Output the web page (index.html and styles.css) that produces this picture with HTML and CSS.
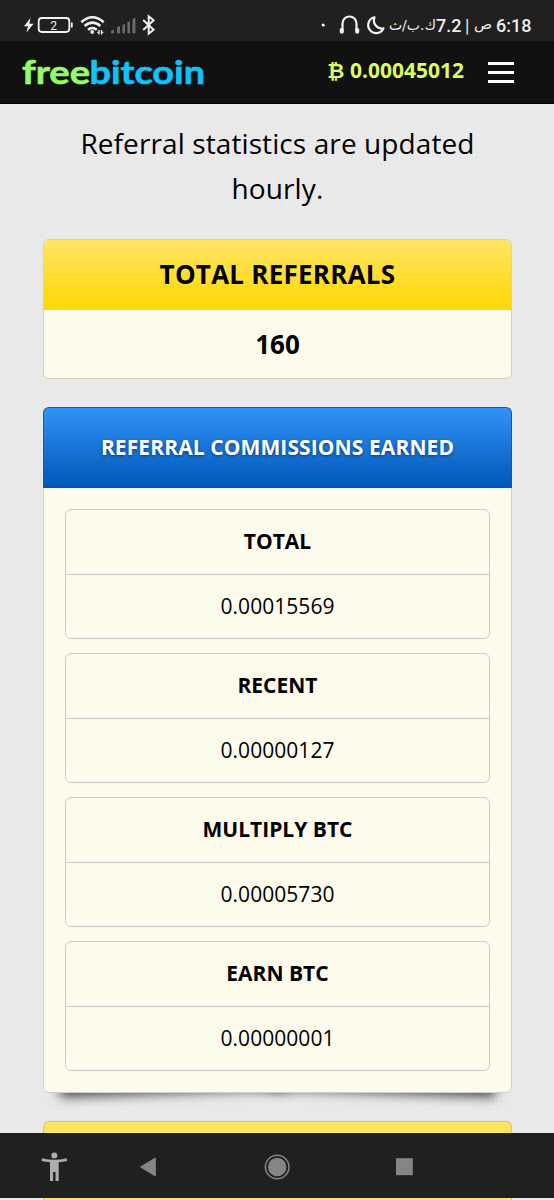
FILE: index.html
```html
<!DOCTYPE html>
<html lang="en">
<head>
    <meta charset="UTF-8">
    <meta name="viewport" content="width=device-width, initial-scale=1.0">
    <title>freebitcoin - Referrals</title>
    <link rel="stylesheet" href="styles.css">
</head>
<body>
    <div class="status-bar">
        <svg class="status-icons" width="160" height="41" viewBox="0 0 160 41">
            <path d="M30.500 18 24 26.300h4l-1.600 6.200 7.200-8.800h-4.200z" fill="#f2f2f2"/>
            <rect x="38.700" y="18" width="30.600" height="14" rx="3.200" fill="none" stroke="#f2f2f2" stroke-width="1.800"/>
            <path d="M71.800 22.500v5" stroke="#f2f2f2" stroke-width="1.800"/>
            <text class="battery-level" x="53.500" y="29.500">2</text>
            <g fill="none" stroke="#f2f2f2" stroke-width="2.500">
                <path d="M81.300 22.200q11.200-9.800 22.400 0"/>
                <path d="M84.600 26q7.900-6.800 15.800 0"/>
                <path d="M88 29.800q4.400-3.700 8.800 0"/>
            </g>
            <circle cx="92.200" cy="32" r="1.900" fill="#f2f2f2"/>
            <path d="M99 30v4.500M101.500 30v4.500M97.200 32.300h1.800M101.500 32.300h1.800" stroke="#f2f2f2" stroke-width="1.300"/>
            <path d="M111 33.300v-2.200l3-1.600v3.800zM117 33.300v-6l3-1.300v7.300zM122.400 33.300v-8.300l2.600-1.300v9.600zM127.400 33.300v-11l2.600-1.300v12.300zM132.500 33.300V19.300l2.900-1.800v15.800z" fill="#6b6b6b"/>
            <path d="M143.200 20l10.400 9.700-4.900 4V16.300l4.900 4-10.400 9.700" fill="none" stroke="#f2f2f2" stroke-width="2"/>
        </svg>
        <div class="status-right">
            <svg width="71" height="41" viewBox="318 0 71 41">
                <circle cx="323.200" cy="25" r="1.600" fill="#f2f2f2"/>
                <path d="M342.500 31V23.500a7 7 0 0 1 14 0V31" fill="none" stroke="#f2f2f2" stroke-width="2.200"/>
                <rect x="339.800" y="28" width="4" height="5.500" rx="1.600" fill="#f2f2f2"/>
                <rect x="355.200" y="28" width="4" height="5.500" rx="1.600" fill="#f2f2f2"/>
                <path d="M374.500 17.300A8 8 0 1 0 383.500 28.400 8.200 8.200 0 0 1 374.500 17.300z" fill="none" stroke="#f2f2f2" stroke-width="2.200" stroke-linejoin="round"/>
            </svg>
            <span class="speed-unit" dir="rtl">ك.ب/ث</span>
            <span class="speed">7.2</span>
            <span class="divider">|</span>
            <span class="meridiem">ص</span>
            <span class="time">6:18</span>
        </div>
    </div>

    <header class="header">
        <svg class="logo" width="190" height="54" viewBox="0 0 190 54">
            <text class="logo-free" x="2" y="38" textLength="68" lengthAdjust="spacingAndGlyphs">free</text>
            <text class="logo-bitcoin" x="69.500" y="38" textLength="115.500" lengthAdjust="spacingAndGlyphs">bitcoin</text>
        </svg>
        <div class="balance"><span class="coin">₿</span> 0.00045012</div>
        <div class="menu"><i></i><i></i><i></i></div>
    </header>

    <main class="content">
        <p class="notice">Referral statistics are updated hourly.</p>

        <section class="card">
            <h2 class="card-title">TOTAL REFERRALS</h2>
            <div class="card-value">160</div>
        </section>

        <div class="commissions-wrap">
            <section class="commissions">
                <h2 class="commissions-title">REFERRAL COMMISSIONS EARNED</h2>
                <div class="boxes">
                    <div class="box">
                        <h3>TOTAL</h3>
                        <p>0.00015569</p>
                    </div>
                    <div class="box">
                        <h3>RECENT</h3>
                        <p>0.00000127</p>
                    </div>
                    <div class="box">
                        <h3>MULTIPLY BTC</h3>
                        <p>0.00005730</p>
                    </div>
                    <div class="box">
                        <h3>EARN BTC</h3>
                        <p>0.00000001</p>
                    </div>
                </div>
            </section>
        </div>

        <section class="next-card"></section>
    </main>

    <nav class="nav-bar">
        <svg width="554" height="65" viewBox="0 0 554 65">
            <g fill="#adadad">
                <circle cx="54.300" cy="22.500" r="3"/>
                <path d="M42 25.300q12.300 3 24.600 0l.5 2.700q-4.300 1-8.400 1.300v18.700h-3.200v-9h-2.400v9H50V29.300q-4.200-.3-8.400-1.300z"/>
            </g>
            <path d="M140.500 34l14.800-9v18z" fill="#858585" stroke="#858585" stroke-linejoin="round"/>
            <circle cx="277.200" cy="34" r="11.800" fill="none" stroke="#858585" stroke-width="1.500"/>
            <circle cx="277.200" cy="34" r="9.200" fill="#858585"/>
            <rect x="396" y="25.200" width="16.800" height="17" fill="#858585"/>
        </svg>
    </nav>
</body>
</html>
```

FILE: styles.css
```css
* {
    box-sizing: border-box;
}
body {
    margin: 0;
    height: 1200px;
    overflow: hidden;
    font-family: "Open Sans", sans-serif;
    color: #000;
    background-color: #eaeaea;
    background-image:
        linear-gradient(rgba(0, 0, 0, 0.008) 1px, transparent 1px),
        linear-gradient(90deg, rgba(0, 0, 0, 0.008) 1px, transparent 1px);
    background-size: 4px 4px;
}
h2, h3, p {
    margin: 0;
}
svg {
    display: block;
}
.status-bar {
    display: flex;
    justify-content: space-between;
    height: 41px;
    padding-right: 24px;
    background: #202020;
}
.battery-level {
    font: 400 12px Roboto, sans-serif;
    fill: #f2f2f2;
    text-anchor: middle;
}
.status-right {
    display: flex;
    color: #eee;
    font: 500 18px/51px Roboto, sans-serif;
    white-space: nowrap;
}
.speed-unit {
    width: 47px;
    font: 14px/50px "DejaVu Sans", sans-serif;
    letter-spacing: -0.3px;
}
.speed {
    width: 29px;
}
.divider {
    width: 9px;
    font-weight: 400;
}
.meridiem {
    width: 22px;
    font: 15px/49px "DejaVu Sans", sans-serif;
}
.time {
    width: 34px;
}
.header {
    display: flex;
    align-items: center;
    height: 63px;
    padding: 0 40px 0 20px;
    background: #111;
    border-bottom: 1px solid #000;
}
.logo {
    margin-top: 1px;
}
.logo text {
    font-family: Lato, sans-serif;
    font-size: 33px;
    font-weight: 700;
    stroke-width: 0.6px;
}
.logo .logo-free {
    fill: #95fb6b;
    stroke: #95fb6b;
}
.logo .logo-bitcoin {
    fill: #11c1fa;
    stroke: #11c1fa;
}
.balance {
    margin-left: auto;
    margin-right: 24px;
    font-size: 21px;
    font-weight: 700;
    line-height: 30px;
    margin-top: -5px;
    color: #dcfc68;
    white-space: nowrap;
}
.menu {
    display: flex;
    flex-direction: column;
    gap: 6px;
    width: 26px;
    margin-top: 1px;
}
.menu i {
    height: 3px;
    background: #fff;
}
.content {
    padding: 17px 42px 0 43px;
}
.notice {
    height: 118px;
    font-size: 28px;
    line-height: 45px;
    letter-spacing: 0.1px;
    text-align: center;
}
.card {
    height: 140px;
    border: 1px solid #d0d0c4;
    border-radius: 6px;
    background: #fdfbeb;
    overflow: hidden;
    text-align: center;
}
.card-title {
    height: 70px;
    font-size: 26px;
    line-height: 68px;
    letter-spacing: 0.25px;
    background: linear-gradient(#ffe566, #ffd700);
}
.card-value {
    font-size: 26px;
    font-weight: 700;
    line-height: 69px;
}
.commissions-wrap {
    position: relative;
    z-index: 0;
    margin-top: 28px;
}
/* lifted corner shadows under the card */
.commissions-wrap::before,
.commissions-wrap::after {
    content: "";
    position: absolute;
    z-index: -1;
    bottom: 15px;
    width: 49%;
    height: 20px;
    box-shadow: 0 15px 12px rgba(0, 0, 0, 0.7);
}
.commissions-wrap::before {
    left: 16px;
    transform: rotate(-2deg);
}
.commissions-wrap::after {
    right: 16px;
    transform: rotate(2deg);
}
.commissions {
    height: 686px;
    border: 1px solid #d0d0c8;
    border-radius: 6px;
    background: #fdfbeb;
    text-align: center;
}
.commissions-title {
    height: 81px;
    margin: -1px -1px 0;
    border: 1px solid #1059a8;
    border-bottom-color: #0052ad;
    border-radius: 6px 6px 0 0;
    background: linear-gradient(#3193f8, #0057b7);
    color: #fff;
    font-size: 21px;
    line-height: 78px;
    letter-spacing: 0.1px;
    text-shadow: 0 1px 3px rgba(0, 0, 0, 0.5);
}
.boxes {
    display: flex;
    flex-direction: column;
    gap: 14px;
    padding: 21px 21px 0;
}
.box {
    height: 130px;
    border: 1px solid #ccc;
    border-radius: 6px;
}
.box h3 {
    height: 65px;
    border-bottom: 1px solid #ccc;
    font-size: 21px;
    line-height: 63px;
}
.box p {
    font-size: 21px;
    line-height: 62px;
    letter-spacing: 0.05px;
}
.next-card {
    height: 79px;
    margin-top: 28px;
    border: 1px solid #d8c860;
    border-bottom: 0;
    border-radius: 6px 6px 0 0;
    background: #ffe461;
}
.nav-bar {
    position: fixed;
    left: 0;
    bottom: 2px;
    z-index: 1;
    width: 100%;
    height: 65px;
    background: #202020;
}
```
